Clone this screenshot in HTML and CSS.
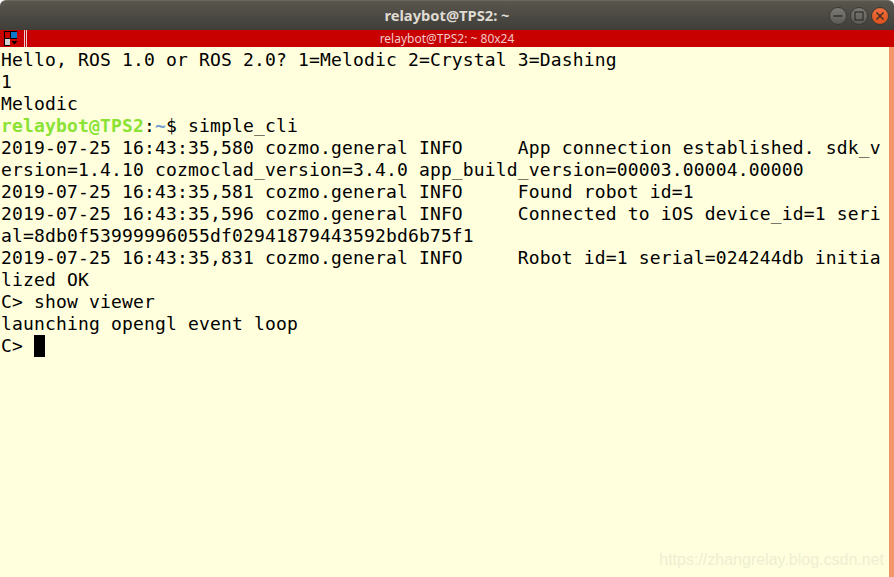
FILE: index.html
```
<!DOCTYPE html>
<html lang="en">
<head>
<meta charset="utf-8">
<title>relaybot@TPS2: ~</title>
<link rel="stylesheet" href="styles.css">
</head>
<body>
<div class="window">
  <header class="titlebar">
    <span class="title">relaybot@TPS2: ~</span>
    <div class="controls">
      <span class="btn"><svg width="12" height="12" viewBox="0 0 12 12"><path d="M1.500 6h9" stroke="#2f2e2a" stroke-width="1.400"/></svg></span>
      <span class="btn"><svg width="12" height="12" viewBox="0 0 12 12"><rect x="2" y="2" width="8" height="8" fill="none" stroke="#2f2e2a" stroke-width="1.200"/></svg></span>
      <span class="btn close"><svg width="12" height="12" viewBox="0 0 12 12"><path d="M2.500 2.500l7 7M9.500 2.500l-7 7" stroke="#3a2a20" stroke-width="1.400"/></svg></span>
    </div>
  </header>
  <div class="tabbar">
    <svg class="layout-icon" width="17" height="15" viewBox="0 0 17 15"><rect x="0" y="0" width="13" height="15" fill="#000"/><rect x="1" y="1" width="5" height="6" fill="#c80000"/><rect x="7" y="1" width="6" height="6" fill="#0a78c8"/><rect x="1" y="8" width="5" height="6" fill="#d2d2d2"/><rect x="6" y="8" width="11" height="7" fill="#c80000"/><path d="M7.500 10h6l-3 3.500z" fill="#000"/></svg>
    <span class="grip"></span>
    <span class="tab-title">relaybot@TPS2: ~ 80x24</span>
  </div>
  <div class="body">
    <pre class="terminal">Hello, ROS 1.0 or ROS 2.0? 1=Melodic 2=Crystal 3=Dashing
1
Melodic
<span class="user">relaybot@TPS2</span>:<span class="path">~</span>$ simple_cli
2019-07-25 16:43:35,580 cozmo.general INFO     App connection established. sdk_v
ersion=1.4.10 cozmoclad_version=3.4.0 app_build_version=00003.00004.00000
2019-07-25 16:43:35,581 cozmo.general INFO     Found robot id=1
2019-07-25 16:43:35,596 cozmo.general INFO     Connected to iOS device_id=1 seri
al=8db0f53999996055df02941879443592bd6b75f1
2019-07-25 16:43:35,831 cozmo.general INFO     Robot id=1 serial=024244db initia
lized OK
C&gt; show viewer
launching opengl event loop
C&gt; <span class="cursor"> </span></pre>
    <div class="scrollbar"></div>
    <span class="watermark">https://zhangrelay.blog.csdn.net</span>
  </div>
</div>
</body>
</html>
```
FILE: styles.css
```
html, body {
  margin: 0;
  padding: 0;
  height: 100%;
  background: #fff;
}
.window {
  width: 894px;
  height: 577px;
  display: flex;
  flex-direction: column;
  overflow: hidden;
}
.titlebar {
  position: relative;
  flex: 0 0 30px;
  display: flex;
  align-items: center;
  justify-content: center;
  background: linear-gradient(#5a574f 0, #56534b 10%, #3f3e39 100%);
  border-radius: 6px 6px 0 0;
  box-sizing: border-box;
  border-top: 1px solid #6b685f;
  padding-bottom: 2px;
}
.title {
  font: 700 14.700px "Noto Sans", sans-serif;
  color: #dfdbd2;
}
.controls {
  position: absolute;
  right: 5px;
  top: 6px;
  display: flex;
  gap: 3px;
}
.btn {
  width: 16px;
  height: 16px;
  border-radius: 50%;
  display: flex;
  align-items: center;
  justify-content: center;
  background: linear-gradient(#7c7a74, #5b5a55);
  border: 0.500px solid #3a3934;
}
.btn.close {
  background: linear-gradient(#f0703f, #d9501e);
}
.tabbar {
  position: relative;
  flex: 0 0 17px;
  display: flex;
  align-items: center;
  justify-content: center;
  background: #c80000;
}
.layout-icon {
  position: absolute;
  left: 4px;
  top: 1px;
}
.grip {
  position: absolute;
  left: 24px;
  top: 0;
  width: 1px;
  height: 17px;
  border-left: 1px solid #e8d0d0;
  border-right: 1px solid #e8d0d0;
}
.tab-title {
  font: 400 12px "Noto Sans", sans-serif;
  color: #f2c8c8;
}
.body {
  position: relative;
  flex: 1;
  display: flex;
  background: #ffffdd;
  min-height: 0;
}
.terminal {
  flex: 1;
  margin: 0;
  padding: 2px 0 0 1px;
  font: 400 18px/22px "DejaVu Sans Mono", monospace;
  letter-spacing: 0.160px;
  color: #000;
  overflow: hidden;
}
.user {
  color: #8ae234;
  font-weight: 700;
}
.path {
  color: #729fcf;
  font-weight: 700;
}
.cursor {
  display: inline-block;
  width: 11px;
  height: 22px;
  vertical-align: top;
  background: #000;
}
.scrollbar {
  flex: 0 0 5px;
  background: #f3956a;
}
.watermark {
  position: absolute;
  right: 10px;
  bottom: 8px;
  font: 400 16px "Liberation Sans", sans-serif;
  color: #eeeed2;
}
```
